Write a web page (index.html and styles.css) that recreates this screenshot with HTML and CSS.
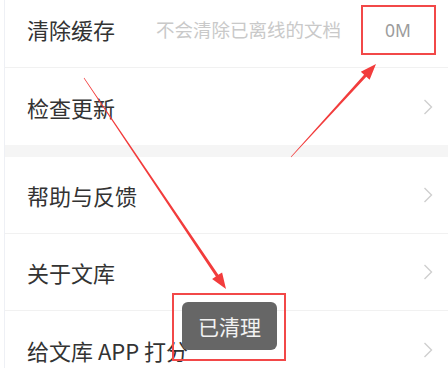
FILE: index.html
```html
<!DOCTYPE html>
<html lang="zh">
<head>
<meta charset="utf-8">
<link rel="stylesheet" href="styles.css">
</head>
<body>
<div class="page">
  <div class="list">
    <div class="row row-first">
      <span class="title">清除缓存</span>
      <span class="hint">不会清除已离线的文档</span>
      <span class="value">0M</span>
    </div>
    <div class="row row-plain">
      <span class="title">检查更新</span>
      <svg class="chev" viewBox="0 0 10 16" width="10" height="16"><polyline points="1.5,1 8.5,8 1.5,15"/></svg>
    </div>
    <div class="band"></div>
    <div class="row">
      <span class="title">帮助与反馈</span>
      <svg class="chev" viewBox="0 0 10 16" width="10" height="16"><polyline points="1.5,1 8.5,8 1.5,15"/></svg>
    </div>
    <div class="row">
      <span class="title">关于文库</span>
      <svg class="chev" viewBox="0 0 10 16" width="10" height="16"><polyline points="1.5,1 8.5,8 1.5,15"/></svg>
    </div>
    <div class="row row-plain">
      <span class="title">给文库 APP 打分</span>
      <svg class="chev" viewBox="0 0 10 16" width="10" height="16"><polyline points="1.5,1 8.5,8 1.5,15"/></svg>
    </div>
  </div>
  <div class="toast">已清理</div>
  <div class="mark mark-value"></div>
  <div class="mark mark-toast"></div>
  <svg class="arrows" viewBox="0 0 448 368" width="448" height="368">
    <polygon points="84.25,77.83 218.35,274.86 222.1,272.4 226,289 212.1,279.0 215.85,276.54 83.75,78.17"/>
    <polygon points="290.8,156.8 364.1,74.8 360.8,71.8 376,64 369.6,79.8 366.3,76.8 291.2,157.2"/>
  </svg>
</div>
</body>
</html>
```

FILE: styles.css
```css
html, body {
  margin: 0;
  padding: 0;
  background: #ffffff;
  overflow: hidden;
}
body {
  width: 448px;
  height: 368px;
  font-family: "Noto Sans CJK SC", "Noto Sans", sans-serif;
}
.page {
  position: relative;
  width: 448px;
  height: 368px;
  overflow: hidden;
}
.list {
  margin-top: -9px;
  margin-left: 4px;
  border-left: 1px solid #eef0f5;
  display: flex;
  flex-direction: column;
}
.row {
  height: 76px;
  border-bottom: 1px solid #f1f1f1;
  display: flex;
  align-items: center;
  padding: 0 15px 0 22px;
  flex-shrink: 0;
}
.row-plain {
  height: 77px;
  border-bottom: none;
}
.row-first {
  padding-right: 37px;
}
.title {
  flex: 1;
  font-size: 22px;
  color: #333333;
  white-space: nowrap;
}
.hint {
  font-size: 18.5px;
  color: #c9c9c9;
  margin-right: 44px;
  white-space: nowrap;
}
.value {
  font-size: 17.5px;
  color: #9c9c9c;
  font-family: "Noto Sans", sans-serif;
  margin-top: 1px;
}
.chev polyline {
  fill: none;
  stroke: #cfcfcf;
  stroke-width: 1.4;
}
.band {
  height: 12px;
  background: #f5f5f5;
  flex-shrink: 0;
}
.toast {
  position: absolute;
  left: 182px;
  top: 302px;
  width: 95px;
  height: 48px;
  border-radius: 6px;
  background: #666666;
  color: #f2f2f2;
  font-size: 21px;
  display: flex;
  align-items: center;
  justify-content: center;
}
.mark {
  position: absolute;
  border: 2px solid #f24848;
  box-sizing: border-box;
}
.mark-value {
  left: 361px;
  top: 5px;
  width: 75px;
  height: 50px;
}
.mark-toast {
  left: 172px;
  top: 293px;
  width: 114px;
  height: 68px;
}
.arrows {
  position: absolute;
  left: 0;
  top: 0;
}
.arrows polygon {
  fill: #f23c3c;
}
```
